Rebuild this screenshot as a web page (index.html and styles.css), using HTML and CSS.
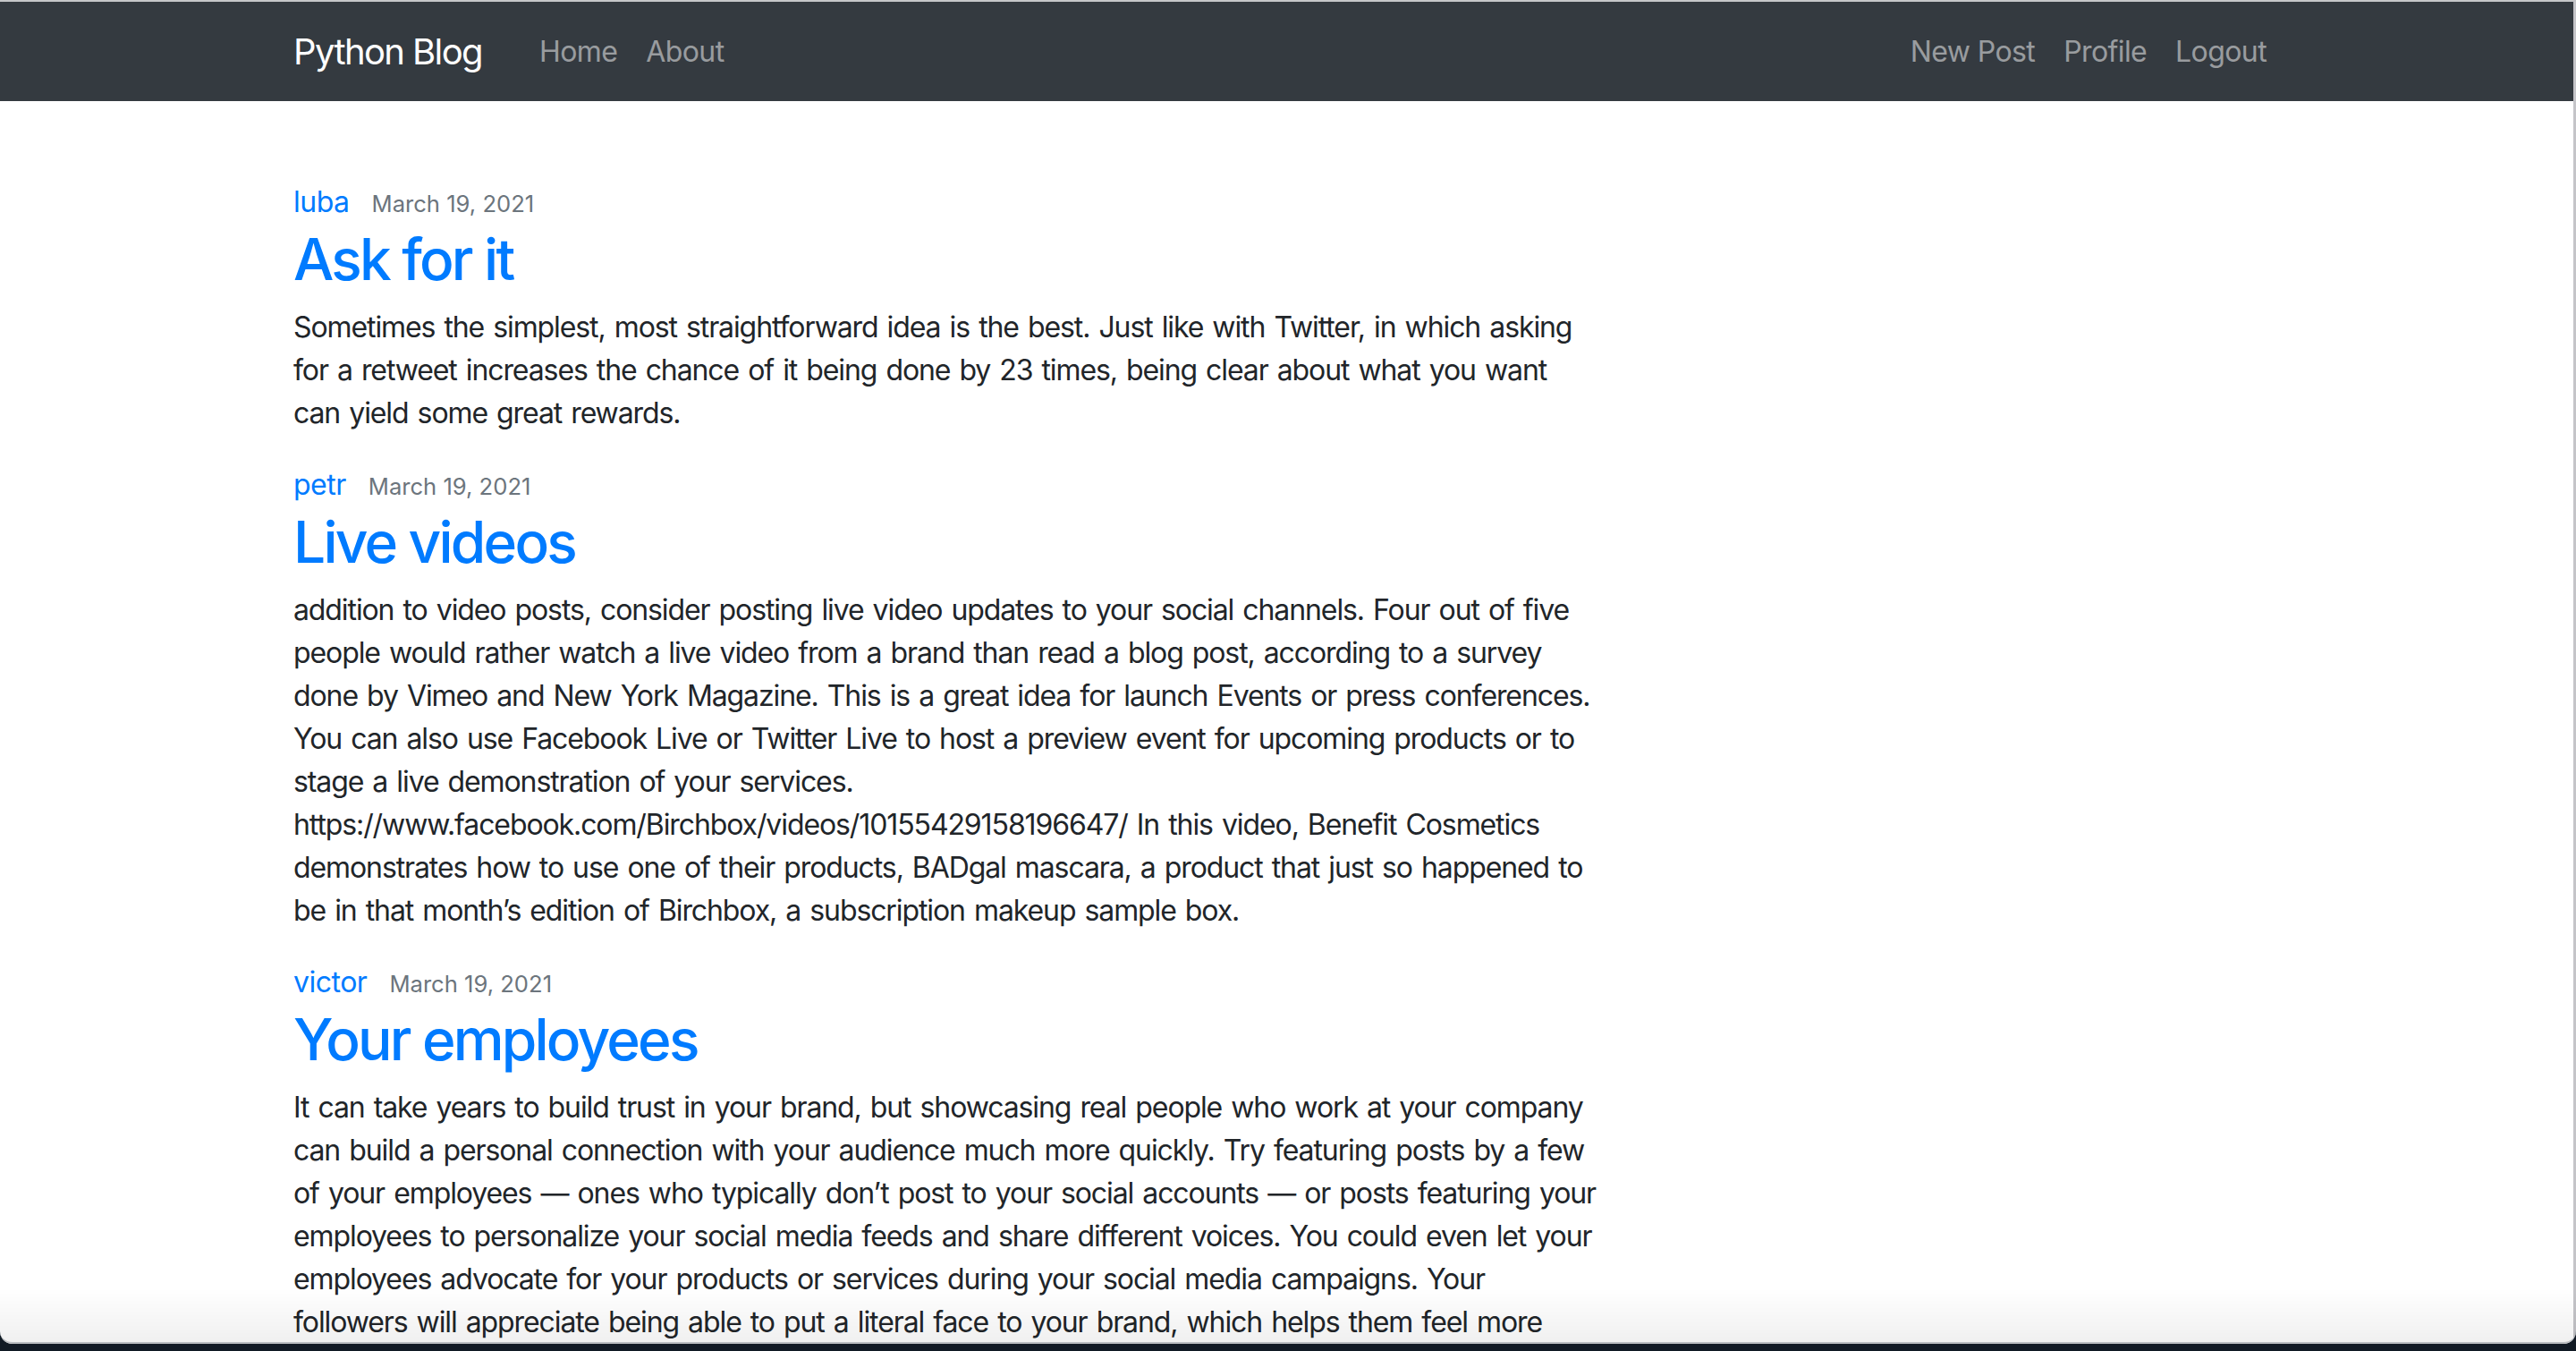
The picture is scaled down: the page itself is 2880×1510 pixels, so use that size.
FILE: index.html
```html
<!DOCTYPE html>
<html lang="en">
<head>
<meta charset="utf-8">
<title>Python Blog</title>
<link rel="stylesheet" href="styles.css">
</head>
<body>
<header class="navbar">
  <div class="container nav-inner">
    <a class="brand" href="#">Python Blog</a>
    <nav class="nav-group">
      <a class="nav-link" href="#">Home</a>
      <a class="nav-link" href="#">About</a>
    </nav>
    <nav class="nav-group nav-right">
      <a class="nav-link" href="#">New Post</a>
      <a class="nav-link" href="#">Profile</a>
      <a class="nav-link" href="#">Logout</a>
    </nav>
  </div>
</header>
<main class="container main">
  <div class="col-main">
    <article class="post">
      <div class="meta"><a class="author" href="#">luba</a> <small class="date">March 19, 2021</small></div>
      <h2 class="title"><a href="#">Ask for it</a></h2>
      <p class="content">Sometimes the simplest, most straightforward idea is the best. Just like with Twitter, in which asking for a retweet increases the chance of it being done by 23 times, being clear about what you want can yield some great rewards.</p>
    </article>
    <article class="post">
      <div class="meta"><a class="author" href="#">petr</a> <small class="date">March 19, 2021</small></div>
      <h2 class="title"><a href="#">Live videos</a></h2>
      <p class="content">addition to video posts, consider posting live video updates to your social channels. Four out of five people would rather watch a live video from a brand than read a blog post, according to a survey done by Vimeo and New York Magazine. This is a great idea for launch Events or press conferences. You can also use Facebook Live or Twitter Live to host a preview event for upcoming products or to stage a live demonstration of your services. https://www.facebook.com/Birchbox/videos/10155429158196647/ In this video, Benefit Cosmetics demonstrates how to use one of their products, BADgal mascara, a product that just so happened to be in that month’s edition of Birchbox, a subscription makeup sample box.</p>
    </article>
    <article class="post">
      <div class="meta"><a class="author" href="#">victor</a> <small class="date">March 19, 2021</small></div>
      <h2 class="title"><a href="#">Your employees</a></h2>
      <p class="content">It can take years to build trust in your brand, but showcasing real people who work at your company can build a personal connection with your audience much more quickly. Try featuring posts by a few of your employees — ones who typically don’t post to your social accounts — or posts featuring your employees to personalize your social media feeds and share different voices. You could even let your employees advocate for your products or services during your social media campaigns. Your followers will appreciate being able to put a literal face to your brand, which helps them feel more connected to your business.</p>
    </article>
  </div>
</main>
<div class="win-right"></div>
<div class="win-bottom"><div class="win-edge"></div></div>
</body>
</html>
```
FILE: styles.css
```css
* { box-sizing: border-box; }
html, body { margin: 0; padding: 0; }
body {
  font-family: Inter, "Noto Sans", "Liberation Sans", sans-serif;
  font-size: 32px;
  line-height: 48px;
  color: #212529;
  background: #fff;
  border-top: 2px solid #c6c7c9;
}
a { text-decoration: none; }
.container {
  width: 2280px;
  margin: 0 auto;
  padding: 0 30px 0 28px;
}
.navbar {
  background: #343a40;
  height: 111px;
}
.nav-inner {
  display: flex;
  align-items: center;
  height: 100%;
}
.brand {
  color: #fff;
  font-size: 40px;
  line-height: 60px;
  letter-spacing: -1.6px;
  margin-right: 48px;
  padding: 10px 0;
}
.nav-group { display: flex; }
.nav-right { margin-left: auto; }
.nav-link {
  color: rgba(255,255,255,.5);
  padding: 16px;
  font-size: 32px;
  line-height: 48px;
  letter-spacing: -0.6px;
}
.main { padding-top: 89px; }
.col-main { width: 1460px; }
.meta { line-height: 48px; }
.author { color: #007bff; margin-right: 16px; letter-spacing: -0.5px; }
.date { color: #6c757d; font-size: 25.6px; }
.title {
  margin: 0 0 15px;
  font-size: 64px;
  line-height: 75px;
  font-weight: 500;
  letter-spacing: -2.8px;
}
.title a { color: #007bff; }
.content {
  margin: 0 0 32px;
  letter-spacing: -1.1px;
  word-spacing: 2.2px;
}
.win-right {
  position: fixed;
  top: 0; right: 0; bottom: 0;
  width: 3px;
  background: #c4c4c8;
}
.win-bottom {
  position: fixed;
  left: 0; right: 0; bottom: 0;
  height: 70px;
  overflow: hidden;
}
.win-edge {
  height: 62px;
  border-radius: 0 0 14px 14px;
  background: linear-gradient(to bottom, rgba(0,0,0,0), rgba(0,0,0,0.06));
  border-bottom: 2px solid #b9bcc0;
  box-shadow: 0 0 0 60px #111a24;
}
```
